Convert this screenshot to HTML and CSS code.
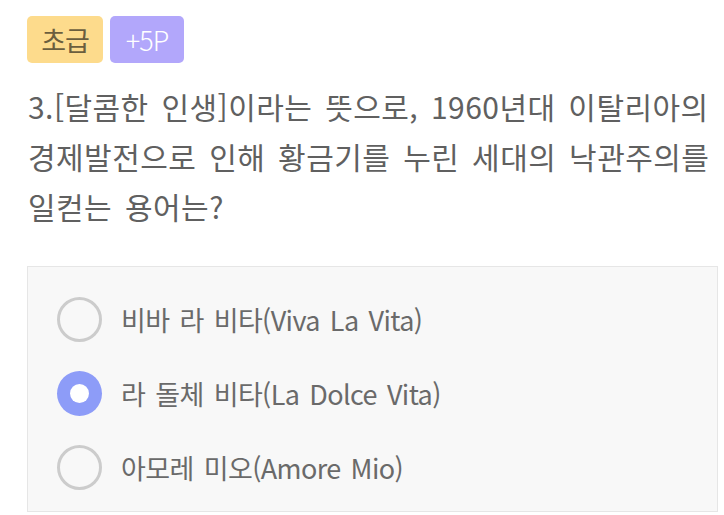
FILE: index.html
```html
<!DOCTYPE html>
<html lang="ko">
<head>
<meta charset="utf-8">
<link rel="stylesheet" href="styles.css">
</head>
<body>
<div class="page">
  <div class="badges">
    <span class="badge level">초급</span>
    <span class="badge point">+5P</span>
  </div>
  <p class="question">3.[달콤한 인생]이라는 뜻으로, 1960년대 이탈리아의<br>경제발전으로 인해 황금기를 누린 세대의 낙관주의를<br>일컫는 용어는?</p>
  <div class="options">
    <div class="option"><span class="radio"></span><span class="label">비바 라 비타(Viva La Vita)</span></div>
    <div class="option"><span class="radio checked"></span><span class="label">라 돌체 비타(La Dolce Vita)</span></div>
    <div class="option"><span class="radio"></span><span class="label">아모레 미오(Amore Mio)</span></div>
  </div>
</div>
</body>
</html>
```
FILE: styles.css
```css
html, body {
  margin: 0;
  padding: 0;
  background: #ffffff;
}
body {
  font-family: "Noto Sans CJK KR", "Noto Sans", sans-serif;
  width: 724px;
  height: 515px;
  overflow: hidden;
}
.page {
  padding: 16px 6px 0 27px;
}
.badges {
  display: flex;
  gap: 7px;
}
.badge {
  display: flex;
  align-items: center;
  justify-content: center;
  height: 47px;
  border-radius: 5px;
  font-size: 27px;
  font-weight: 400;
  letter-spacing: -1px;
  box-sizing: border-box;
}
.badge.level {
  width: 76px;
  background: #fddb8c;
  color: #6b5e3e;
}
.badge.point {
  width: 74px;
  background: #b2a7fb;
  color: #ffffff;
  font-weight: 300;
}
.question {
  margin: 18px 0 0 1px;
  font-size: 30px;
  font-weight: 400;
  line-height: 50px;
  color: #606060;
  letter-spacing: 0.45px;
  word-spacing: 4px;
  white-space: nowrap;
}
.options {
  margin-top: 35px;
  height: 246px;
  box-sizing: border-box;
  background: #f8f8f8;
  border: 1px solid #e6e6e6;
  padding: 29px 0 0 29px;
  display: flex;
  flex-direction: column;
  gap: 28px;
}
.option {
  display: flex;
  align-items: center;
  gap: 19px;
  height: 46px;
}
.radio {
  width: 45px;
  height: 45px;
  box-sizing: border-box;
  border-radius: 50%;
  border: 3px solid #cccccc;
  flex: none;
  position: relative;
}
.radio.checked {
  border: none;
  background: #8d9cf8;
}
.radio.checked::after {
  content: "";
  position: absolute;
  left: 13px;
  top: 13px;
  width: 19px;
  height: 19px;
  border-radius: 50%;
  background: #ffffff;
}
.label {
  font-size: 27px;
  font-weight: 400;
  color: #6a6a6a;
  letter-spacing: -0.6px;
  word-spacing: 3px;
}
```
